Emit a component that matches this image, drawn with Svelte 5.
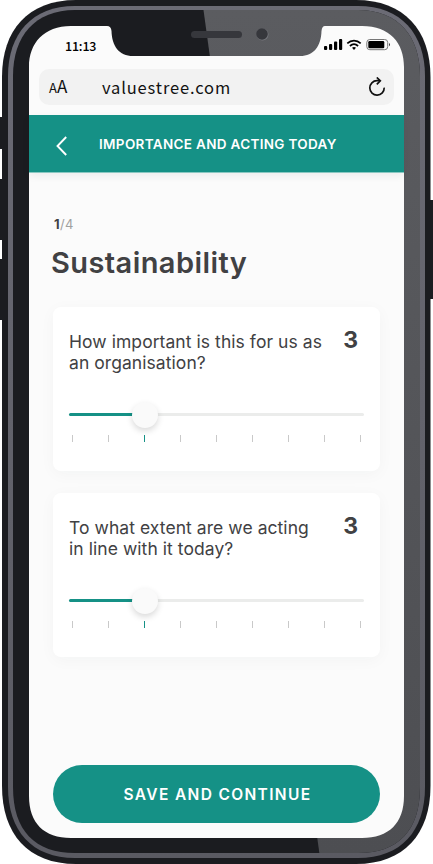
<script>
    let step = 1;
    let totalSteps = 4;
    let topic = 'Sustainability';
    const marks = [1, 2, 3, 4, 5, 6, 7, 8, 9];

    let questions = [
        { lines: ['How important is this for us as', 'an organisation?'], value: 3 },
        { lines: ['To what extent are we acting', 'in line with it today?'], value: 3 }
    ];

    // the first and last tick sit slightly inside the track
    const position = (value) => 4 + (value - 1) * 36;
</script>

<div class="phone">
    <svg class="device" viewBox="0 0 433 864" aria-hidden="true">
        <defs>
            <linearGradient id="glare" x1="0" y1="0" x2="0" y2="1">
                <stop offset="0" stop-color="#5b5c60" />
                <stop offset="1" stop-color="#4d4e52" />
            </linearGradient>
            <linearGradient id="rim" x1="0" y1="0" x2="0" y2="1">
                <stop offset="0" stop-color="#6b6b75" />
                <stop offset="1" stop-color="#5a5a62" />
            </linearGradient>
            <clipPath id="face">
                <path d="M75 10H358C398 10 420 36 420 76V787C420 831 398 853 358 853H75C35 853 13 831 13 787V76C13 36 35 10 75 10Z" />
            </clipPath>
        </defs>
        <path fill="#1b1c20" d="M0 117h4v32H0zM0 179h4v61H0zM0 259h4v61H0zM429 200h4v99h-4z" />
        <path fill="#1b1c20" d="M76 0H356C404 0 430.500 30 430.500 77V786C430.500 834 404 864 356 864H76C28 864 2 834 2 786V77C2 30 28 0 76 0Z" />
        <path fill="url(#rim)" d="M75 6H358C401 6 425 34 425 76V787C425 831 401 858 358 858H75C32 858 8 831 8 787V76C8 34 32 6 75 6Z" />
        <g clip-path="url(#face)">
            <rect x="8" y="6" width="420" height="852" fill="#1b1c20" />
            <path fill="url(#glare)" d="M203.500 10H421V854H319.500Z" />
        </g>
        <path fill="#fbfbfb" d="M71 26H107Q111 26 111.500 31C112 46 119 56 133 56H300C314 56 321 46 321.500 31Q322 26 325 26H362C390 26 404 43 404 67V796C404 823 389 838 362 838H71C44 838 29 823 29 796V67C29 43 44 26 71 26Z" />
        <rect x="191" y="31" width="51" height="7" rx="3.500" fill="#36373c" />
        <circle cx="262.500" cy="34.500" r="6" fill="#77787e" />
        <circle cx="262" cy="34" r="5.800" fill="#36373c" />
    </svg>

    <div class="screen">
        <div class="status">
            <span class="time">11:13</span>
            <svg width="68" height="12" viewBox="0 0 68 12" aria-hidden="true">
                <rect x="0" y="7" width="3.200" height="4" rx="1" />
                <rect x="5" y="5" width="3.200" height="6" rx="1" />
                <rect x="10" y="2.500" width="3.200" height="8.500" rx="1" />
                <rect x="15" y="0" width="3.200" height="11" rx="1" />
                <g fill="none" stroke="#000" stroke-width="1.700">
                    <path d="M23.300 4.300C27.200 0.600 32.800 0.600 36.700 4.300" />
                    <path d="M25.900 7C28.400 4.700 31.600 4.700 34.100 7" />
                </g>
                <path d="M28 8.700Q30 7.200 32 8.700L30 10.900Z" />
                <rect x="42.800" y="0.500" width="20.900" height="10.200" rx="3" fill="none" stroke="#777" />
                <rect x="44.300" y="2" width="16" height="7.200" rx="1.300" />
                <path fill="#333" d="M65 4Q67 5.600 65 7.200Z" />
            </svg>
        </div>

        <div class="address">
            <span class="text-size"><small>A</small>A</span>
            <span class="url">valuestree.com</span>
            <svg width="18" height="20" viewBox="0 0 18 20" fill="none" stroke="#111" stroke-width="1.700" aria-hidden="true">
                <path d="M16.200 10.600A7.200 7.200 0 1 1 9 3.700H12" />
                <path d="M8.800 0.500L12.300 3.800L8.800 7.300" />
            </svg>
        </div>

        <header>
            <button class="back" aria-label="Back">
                <svg width="12" height="20" viewBox="0 0 12 20" fill="none" stroke="#fff" stroke-width="1.900">
                    <path d="M10.200 1L1.500 10L10.200 19" />
                </svg>
            </button>
            <span class="title">IMPORTANCE AND ACTING TODAY</span>
        </header>

        <main>
            <p class="step"><b>{step}</b>/{totalSteps}</p>
            <h1>{topic}</h1>

            {#each questions as question}
                <section class="card">
                    <div class="question">
                        <p>{question.lines[0]}<br />{question.lines[1]}</p>
                        <strong>{question.value}</strong>
                    </div>
                    <div class="slider">
                        <div class="fill" style="width: {position(question.value)}px"></div>
                        <div class="thumb"></div>
                    </div>
                    <div class="ticks">
                        {#each marks as mark}
                            <i class:active={mark === question.value}></i>
                        {/each}
                    </div>
                </section>
            {/each}

            <button class="save"><span>SAVE AND CONTINUE</span></button>
        </main>
    </div>
</div>

<style>
    :global(body) {
        background: #fff;
    }

    .phone {
        position: relative;
        box-sizing: border-box;
        width: 433px;
        height: 864px;
        padding: 26px 29px;
        overflow: hidden;
        font-family: Inter, "Liberation Sans", sans-serif;
        color: #414143;
    }

    .device {
        position: absolute;
        inset: 0;
        width: 433px;
        height: 864px;
    }

    .screen {
        position: relative;
        display: flex;
        flex-direction: column;
        width: 375px;
        height: 812px;
    }

    p, h1 {
        margin: 0;
    }

    span, p, h1 {
        white-space: nowrap;
    }

    button {
        border: 0;
        padding: 0;
        font: inherit;
        cursor: pointer;
    }

    .status {
        display: flex;
        align-items: center;
        justify-content: space-between;
        height: 39px;
        padding: 0 12px 4px 36px;
        box-sizing: border-box;
    }

    .status svg {
        margin-top: 2px;
    }

    .time {
        padding-top: 5px;
        font: 500 12.5px/16px "Noto Sans CJK SC", sans-serif;
        letter-spacing: -0.2px;
        color: #000;
    }

    .address {
        display: flex;
        align-items: center;
        box-sizing: border-box;
        width: 355px;
        height: 36px;
        margin: 4px 10px 10px;
        padding: 0 8px 0 10px;
        border-radius: 10px;
        background: #f2f2f2;
        font: 400 17px/36px "Noto Sans CJK SC", sans-serif;
        color: #111;
    }

    .text-size {
        width: 53px;
        font-size: 17px;
    }

    .text-size small {
        font-size: 13px;
    }

    .url {
        flex: 1;
        font-size: 16.5px;
        letter-spacing: 0.85px;
    }

    header {
        display: flex;
        align-items: center;
        height: 57px;
        padding-left: 27px;
        background: #159186;
        border-bottom: 1px solid #8bc8c2;
        box-shadow: 0 3px 8px rgba(0, 0, 0, 0.06);
        color: #fff;
    }

    .back {
        display: flex;
        width: 43px;
        padding-top: 4px;
        background: none;
    }

    .title {
        font-size: 13.5px;
        font-weight: 600;
        letter-spacing: 0.33px;
    }

    main {
        flex: 1;
        display: flex;
        flex-direction: column;
        padding: 42px 24px 15px;
    }

    .step {
        padding-left: 1px;
        font-size: 13px;
        line-height: 18px;
        letter-spacing: 0.4px;
        color: #a0a0a0;
    }

    .step b {
        color: #414143;
    }

    h1 {
        margin: 11px 0 26px -2px;
        font-size: 29px;
        line-height: 37px;
        font-weight: 600;
        letter-spacing: 0.42px;
    }

    .card {
        box-sizing: border-box;
        height: 164px;
        margin-bottom: 22px;
        padding: 24px 16px 0;
        border-radius: 8px;
        background: #fff;
        box-shadow: 0 3px 16px rgba(0, 60, 50, 0.035);
    }

    .question {
        display: flex;
        justify-content: space-between;
        height: 82px;
    }

    .question p {
        font-size: 17.5px;
        line-height: 21px;
        letter-spacing: 0.06px;
    }

    .question strong {
        padding-right: 6px;
        font-size: 23px;
        line-height: 19px;
        font-weight: 700;
    }

    .slider {
        display: flex;
        align-items: center;
        height: 3px;
        border-radius: 2px;
        background: #ebeceb;
    }

    .fill {
        height: 3px;
        border-radius: 2px;
        background: #159186;
    }

    .thumb {
        width: 26px;
        height: 26px;
        margin-left: -13px;
        border-radius: 50%;
        background: #fafafa;
        box-shadow: 0 3px 6px rgba(0, 0, 0, 0.15);
    }

    .ticks {
        display: flex;
        justify-content: space-between;
        padding: 19px 3px 0;
    }

    .ticks i {
        width: 1px;
        height: 7px;
        background: #c9c9c9;
    }

    .ticks .active {
        background: #159186;
    }

    .save {
        height: 58px;
        margin-top: auto;
        padding-left: 2px;
        border-radius: 29px;
        background: #159186;
        color: #fff;
        font-size: 15.5px;
        font-weight: 600;
        letter-spacing: 1.35px;
    }
</style>
